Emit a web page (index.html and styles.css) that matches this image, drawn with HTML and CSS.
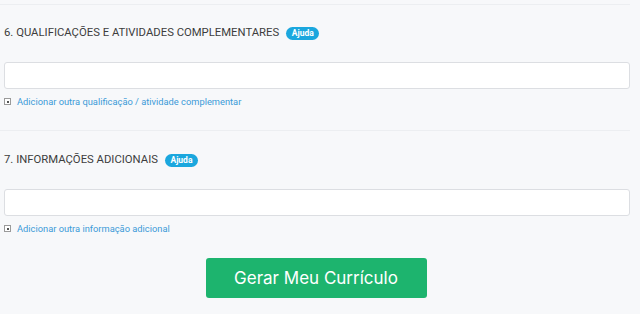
FILE: index.html
```html
<!DOCTYPE html>
<html>

<head>
	<title>Gerar Currículo</title>
	<meta charset="utf-8">
	<meta name="viewport" content="width=device-width, initial-scale=1.0">
	<link rel="stylesheet" href="styles.css">
</head>

<body>
	<main class="pagina">
		<hr class="divisor">

		<section class="bloco">
			<h2 class="titulo">6. QUALIFICAÇÕES E ATIVIDADES COMPLEMENTARES <span class="ajuda">Ajuda</span></h2>
			<input class="campo" type="text">
			<a class="adicionar" href="#"><span class="mais"></span>Adicionar outra qualificação / atividade complementar</a>
		</section>

		<hr class="divisor">

		<section class="bloco segundo">
			<h2 class="titulo">7. INFORMAÇÕES ADICIONAIS <span class="ajuda">Ajuda</span></h2>
			<input class="campo" type="text">
			<a class="adicionar" href="#"><span class="mais"></span>Adicionar outra informação adicional</a>
		</section>

		<div class="acoes">
			<button class="gerar">Gerar Meu Currículo</button>
		</div>
	</main>
</body>

</html>
```

FILE: styles.css
```css
body {
	margin: 0;
	padding: 0;
	background-color: #f7f8fa;
	font-family: "Roboto", "Liberation Sans", sans-serif;
}

.pagina {
	width: 626px;
	padding: 4px 10px 0 4px;
}

.divisor {
	border: none;
	border-top: 1px solid #eceef1;
	margin: 0 0 0 -4px;
}

.bloco {
	padding: 21px 0 23px 0;
}

.segundo {
	padding-top: 22px;
	padding-bottom: 0;
}

.titulo {
	font-size: 11.3px;
	font-weight: normal;
	color: #3d3d3d;
	margin: 0 0 22px 0;
	line-height: 14px;
	display: flex;
	align-items: center;
}

.ajuda {
	display: inline-block;
	background-color: #1ba7de;
	color: white;
	font-size: 8.5px;
	font-weight: bold;
	border-radius: 7px;
	padding: 0 5.5px;
	line-height: 13px;
	margin-left: 7px;
}

.campo {
	display: block;
	box-sizing: border-box;
	width: 626px;
	height: 27px;
	border: 1px solid #dcdee2;
	border-radius: 3px;
	background: white;
	margin: 0 0 7px 0;
}

.adicionar {
	display: flex;
	align-items: center;
	font-size: 9.3px;
	color: #3b9ad8;
	text-decoration: none;
}

.mais {
	box-sizing: border-box;
	width: 7px;
	height: 7px;
	border: 1px solid #9a9a9a;
	margin-right: 6px;
	position: relative;
	background: white;
}

.mais::after {
	content: "";
	position: absolute;
	left: 1.5px;
	top: 1.5px;
	width: 2px;
	height: 2px;
	background: #555;
}

.acoes {
	display: flex;
	justify-content: center;
	padding-top: 24px;
}

.gerar {
	width: 221px;
	height: 40px;
	background-color: #1db46e;
	color: white;
	border: none;
	border-radius: 3px;
	font-family: "Inter", sans-serif;
	font-size: 17px;
	margin-left: -2px;
}
```
